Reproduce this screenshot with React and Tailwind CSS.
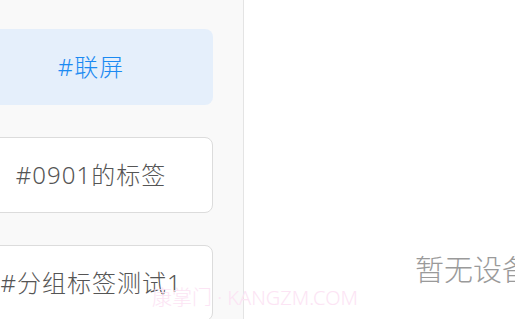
const TAGS = [
  { key: "lianping", label: "#联屏", active: true },
  { key: "0901", label: "#0901的标签" },
  { key: "group", label: "#分组标签测试1" },
];

export default function App() {
  return (
    <div
      className="relative flex h-[319px] w-[515px] overflow-hidden bg-white"
      style={{ fontFamily: '"Noto Sans", "Noto Sans CJK SC", sans-serif' }}
    >
      {/* Tag list */}
      <div className="flex w-[244px] shrink-0 flex-col gap-[32px] border-r border-[#e4e4e4] bg-[#f9f9f9] pt-[29px]">
        {TAGS.map((tag) => (
          <div
            key={tag.key}
            className={`ml-[-31px] flex h-[76px] w-[244px] shrink-0 items-center justify-center whitespace-nowrap rounded-[8px] text-[24px] font-light tracking-[1px] ${
              tag.active
                ? "bg-[#e5effb] text-[#1b8af2]"
                : "border border-[#dcdcdc] bg-white text-[#555]"
            }`}
          >
            {tag.label}
          </div>
        ))}
      </div>

      {/* Device area */}
      <div className="flex flex-1 items-center pl-[171px] pt-[220px]">
        <span className="whitespace-nowrap text-[29px] font-light text-[#9a9a9a]">暂无设备</span>
      </div>

      {/* Watermark */}
      <div className="pointer-events-none absolute left-[152px] top-[283px] whitespace-nowrap text-[20px] font-light text-[#fce4f4]">
        康掌门 · KANGZM.COM
      </div>
    </div>
  );
}
